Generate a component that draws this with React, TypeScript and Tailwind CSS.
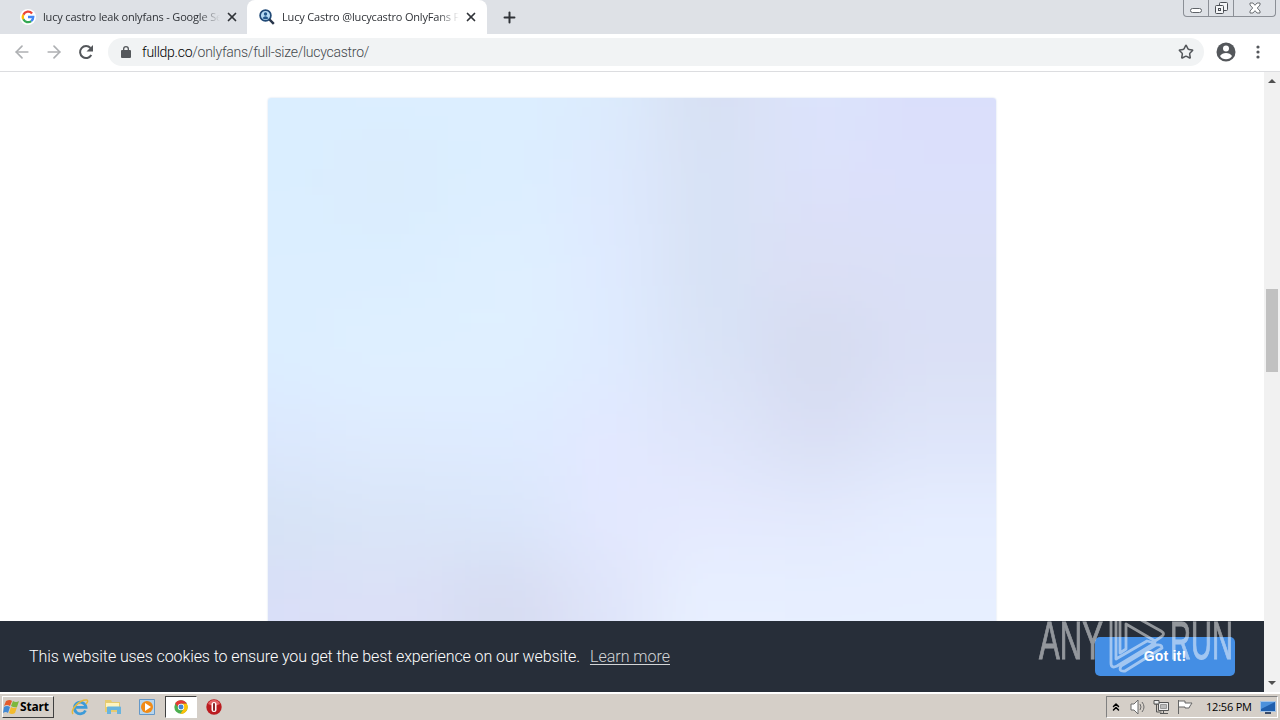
import React from 'react';
import { X, Plus, ArrowLeft, ArrowRight, Star, ChevronsUp } from 'lucide-react';

// colours of the loading gradient, row by row
const mesh = [
  ['#daeeff', '#dceeff', '#dceeff', '#dcebfd', '#d8e0f3', '#dce3fb', '#dadffb'],
  ['#daeeff', '#daecfd', '#dceeff', '#dee9fe', '#d8e2f5', '#dce1fa', '#dce0fb'],
  ['#dceeff', '#dceeff', '#dff0ff', '#dfeaff', '#d8e2f5', '#dbe0f5', '#dae0f7'],
  ['#dceeff', '#dff0ff', '#dff0ff', '#dfebff', '#d9e3f7', '#d6dbf0', '#dae0f5'],
  ['#dce8fe', '#dfebfe', '#dfebff', '#e2e8ff', '#dfe5fa', '#d9dff4', '#dee4f9'],
  ['#d7e3f5', '#d9e5f8', '#dae6fa', '#e3e8ff', '#e4e9fe', '#e3e9fd', '#e5edff'],
  ['#d9dff8', '#dbe0f7', '#d7dcf1', '#dfe4f9', '#e8f0ff', '#e7efff', '#e7efff'],
];
const edges = [-180, 55, 180, 292, 387, 494, 604, 960];

function GoogleIcon() {
  return (
    <svg width="14" height="14" viewBox="0 0 48 48" fill="none" strokeWidth="8">
      <path d="M38 12A18 18 0 0 0 8 16" stroke="#ea4335" />
      <path d="M8 16a18 18 0 0 0 0 16" stroke="#fbbc05" />
      <path d="M8 32a18 18 0 0 0 27 6" stroke="#34a853" />
      <path d="M35 38c5-4 7-8 7-14H24" stroke="#4285f4" />
    </svg>
  );
}

function ChromeIcon() {
  return (
    <svg width="14" height="14" viewBox="0 0 48 48">
      <circle cx="24" cy="24" r="23" fill="#4caf50" />
      <path d="M4 12A23 23 0 0 1 44 13H24v22Z" fill="#e53935" />
      <path d="M24 13h20a23 23 0 0 1-22 34l12-18Z" fill="#ffc107" />
      <circle cx="24" cy="24" r="11" fill="#fff" />
      <circle cx="24" cy="24" r="8.5" fill="#4285d4" />
    </svg>
  );
}

function TabStrip() {
  return (
    <div className="flex h-[34px] bg-[#dee1e6] font-['Open_Sans',sans-serif] text-[11px] tracking-[-0.17px] text-[#303338]">
      <div className="flex w-[247px] items-center pl-5">
        <div className="flex size-4 items-center justify-center rounded-full bg-white"><GoogleIcon /></div>
        <div className="ml-[7px] w-[177px] overflow-hidden whitespace-nowrap [mask-image:linear-gradient(90deg,#000_88%,transparent)]">lucy castro leak onlyfans - Google Se</div>
        <X size={14} strokeWidth={3} className="ml-[5px]" />
      </div>
      <div className="flex w-60 items-center rounded-t-lg bg-white pl-3">
        <svg width="16" height="16" viewBox="0 0 16 16" className="shrink-0">
          <circle cx="6.5" cy="6.5" r="5.4" fill="#b8dcf5" stroke="#214a77" strokeWidth="1.7" />
          <circle cx="6.5" cy="5" r="1.7" fill="#24588c" />
          <path d="M3.4 9.2q3.1-4 6.2 0q-3 2-6.2 0" fill="#24588c" />
          <path d="m10.6 10.6 4.2 4.3" stroke="#273449" strokeWidth="2.4" />
        </svg>
        <div className="ml-[7px] w-[177px] shrink-0 overflow-hidden whitespace-nowrap [mask-image:linear-gradient(90deg,#000_88%,transparent)]">Lucy Castro @lucycastro OnlyFans F</div>
        <X size={14} strokeWidth={3} className="ml-[5px] shrink-0" />
      </div>
      <div className="flex w-11 items-center justify-center"><Plus size={17} strokeWidth={2.8} /></div>
      <div className="ml-auto mr-1 flex h-[17px] w-[93px] rounded-b border border-t-0 border-[#8b8f96]">
        <div className="flex w-[25px] justify-center border-r border-[#8b8f96]">
          <div className="mt-2 h-[5px] w-3 rounded-sm border border-[#5f6368] bg-white" />
        </div>
        <div className="flex w-[25px] justify-center border-r border-[#8b8f96]">
          <svg width="13" height="13" viewBox="0 0 13 13" className="mt-[2px]" fill="#f4f5f7" stroke="#4b4f55">
            <rect x="4.5" y=".5" width="8" height="8" rx="1" />
            <rect x=".5" y="3.5" width="8" height="8" rx="1" />
            <rect x="3.5" y="6.5" width="2" height="2" />
          </svg>
        </div>
        <svg width="12" height="12" viewBox="0 0 12 12" className="mx-auto mt-[2px]" fill="#fff" stroke="#5f6368" strokeWidth=".9">
          <path d="M1 1h3l2 2.3L8 1h3v2L8.3 6 11 9v2H8L6 8.7 4 11H1V9l2.7-3L1 3Z" />
        </svg>
      </div>
    </div>
  );
}

function Toolbar() {
  return (
    <div className="flex h-[38px] items-center border-b border-[#dcdde0] bg-white pb-px pl-3">
      <ArrowLeft size={20} className="text-[#aeb0b3]" />
      <ArrowRight size={20} className="ml-3 text-[#aeb0b3]" />
      <svg width="16" height="16" viewBox="0 0 16 16" className="ml-[14px]">
        <path d="M13.3 11A6 6 0 1 1 12.5 4" fill="none" stroke="#54575b" strokeWidth="2" />
        <path d="M15 1v6.5H8.5Z" fill="#54575b" />
      </svg>
      <div className="ml-[14px] flex h-7 w-[1096px] items-center rounded-full bg-[#f1f3f4] pl-[13px] pr-[10px]">
        <svg width="10" height="12" viewBox="0 0 10 12" fill="#54575b">
          <path d="M1 4h1V3a3 3 0 0 1 6 0v1h1q1 0 1 1v6q0 1-1 1H1q-1 0-1-1V5q0-1 1-1m2.3 0h3.4V3a1.7 1.7 0 0 0-3.4 0Z" />
        </svg>
        <span className="ml-[11px] font-['Roboto',sans-serif] text-[14px] font-light tracking-[-0.26px] text-[#44484c]"><span className="text-black">fulldp.co</span>/onlyfans/full-size/lucycastro/</span>
        <Star size={16} strokeWidth={2.3} className="ml-auto text-[#54575b]" />
      </div>
      <svg width="20" height="20" viewBox="0 0 20 20" className="ml-3">
        <circle cx="10" cy="10" r="9.5" fill="#54575b" />
        <circle cx="10" cy="6.5" r="3" fill="#fff" />
        <path d="M4 14q2-3 6-3t6 3q-2 3.3-6 3.3T4 14" fill="#fff" />
      </svg>
      <svg width="4" height="16" viewBox="0 0 4 16" fill="#54575b" className="ml-5">
        <circle cx="2" cy="3" r="1.6" /><circle cx="2" cy="8" r="1.6" /><circle cx="2" cy="13" r="1.6" />
      </svg>
    </div>
  );
}

function Watermark() {
  return (
    <svg width="200" height="66" viewBox="0 0 200 66" className="absolute right-[27px] bottom-[19px] overflow-visible opacity-50">
      <g fill="#fff" stroke="#fff" strokeWidth="1" fontFamily="Liberation Sans" fontSize="53">
        <text x="2" y="52" textLength="64" lengthAdjust="spacingAndGlyphs">ANY</text>
        <text x="133" y="52" textLength="63" lengthAdjust="spacingAndGlyphs">RUN</text>
      </g>
      <g fill="none" stroke="#fff" strokeWidth="2.8" strokeLinejoin="round">
        <path d="M83 5q1-3 5-1l36 20q5 3 0 6l-6 4-29-17v25l-6 4Z" />
        <path d="M74 11q4-4 5-1v42l31-18 8 2-38 23q-6 3-6-3Z" />
        <path d="m84 59 35-21q6-1 6 3L88 64q-7 1-4-5Z" />
      </g>
    </svg>
  );
}

function CookieBar() {
  return (
    <div className="relative flex h-[71px] shrink-0 items-center bg-[#272e39] px-[29px] font-['Roboto',sans-serif] text-[16px] font-light text-white">
      <span className="tracking-[-0.1px]">This website uses cookies to ensure you get the best experience on our website.</span>
      <a className="ml-[10px] text-[#d3d5d7] underline underline-offset-2">Learn more</a>
      <button className="ml-auto h-[39px] w-[140px] rounded-[5px] bg-[#448ee4] font-['Liberation_Sans',sans-serif] text-[14px] font-bold tracking-[0.2px]">Got it!</button>
      <Watermark />
    </div>
  );
}

function Taskbar() {
  return (
    <div className="flex h-7 items-center border-t-2 border-white bg-[#d5cfc8] pl-[2px] text-black">
      <div className="flex h-[22px] w-[52px] items-center border border-t-white border-l-white border-r-[#404040] border-b-[#404040] text-[12px] font-bold">
        <svg width="17" height="16" viewBox="0 0 17 16">
          <path d="M3 2q4-2 6 0L7 7Q4 5 1 7Z" fill="#e45b2c" />
          <path d="M10 2q3 2 6 0l-2 6q-3 1-6-1Z" fill="#7db83d" />
          <path d="M1 8q3-2 6 0l-2 6q-2-2-5 0Z" fill="#4289d4" />
          <path d="M8 8q3 2 6 0l-2 6q-3 2-6 0Z" fill="#f3bb2d" />
        </svg>
        <span className="tracking-[-0.2px]">Start</span>
      </div>
      <svg width="18" height="18" viewBox="0 0 18 18" fill="none" className="ml-[17px]">
        <path d="M14.5 12.5a5.8 5.8 0 1 1 .5-3.2H5" stroke="#3d9bd8" strokeWidth="2.8" />
        <path d="M2 16C-1 12 9 1 16 2c1.5 1 0 3-1 4" stroke="#e6b93c" strokeWidth="1.5" />
      </svg>
      <svg width="18" height="18" viewBox="0 0 18 18" className="ml-[15px]">
        <path d="M1 2h6l1 2h8v10H1Z" fill="#e6cb70" />
        <path d="M2 5h13v4H2Z" fill="#fff4bf" />
        <path d="M3 16V9.5q0-1 1-1h12q1 0 1 1V16h-4v-4H7v4Z" fill="#69b4de" />
      </svg>
      <svg width="16" height="16" viewBox="0 0 16 16" className="ml-[17px]">
        <path d="M.5.5h15v15H.5Z" fill="#b7d5ed" stroke="#6598c8" />
        <circle cx="8" cy="8" r="6" fill="#f18b16" />
        <path d="m6 4 6 4-6 4Z" fill="#fff" />
      </svg>
      <div className="ml-[10px] flex h-[22px] w-[32px] items-center justify-center border border-t-[#404040] border-l-[#404040] border-r-white border-b-white bg-white"><ChromeIcon /></div>
      <svg width="16" height="16" viewBox="0 0 16 16" className="ml-[9px]">
        <circle cx="8" cy="8" r="7.7" fill="#bb1c20" />
        <path d="M2 5a6.5 6.5 0 0 1 12 0q-6 3-12 0" fill="#e36466" />
        <rect x="5.5" y="3" width="5" height="10" rx="2.5" fill="#fff" />
        <rect x="7.1" y="4" width="1.8" height="8" rx=".9" fill="#801014" />
      </svg>
      <div className="ml-auto mr-[2px] flex h-[22px] w-[172px] items-center border border-t-[#808080] border-l-[#808080] border-r-white border-b-white pl-[3px]">
        <ChevronsUp size={12} strokeWidth={3} />
        <svg width="17" height="16" viewBox="0 0 17 16" className="ml-2 shrink-0" fill="#fff" stroke="#6b6b6b">
          <path d="M1 5h3l4-4v14l-4-4H1Z" />
          <path d="M10 5q2 3 0 6M12 3q4 5 0 10" fill="none" />
        </svg>
        <svg width="17" height="16" viewBox="0 0 17 16" className="ml-[6px] shrink-0" fill="#eee" stroke="#555">
          <path d="M5.5 3.5h10v8h-10Z" /><path d="M7.5 5.5h6v4h-6Z" fill="#bbb" stroke="#999" />
          <path d="M10.5 12v2M7 14.5h8M1.5 1v4h4V1M3.5 5v8h5" fill="none" />
          <path d="M1 1.5h5v3.5H1Z" />
        </svg>
        <svg width="17" height="16" viewBox="0 0 17 16" className="ml-[7px] shrink-0" fill="#fff" stroke="#666">
          <path d="M1.5 1v14M2 2h6v2h7l-2 3-1 2H8V8H2" />
        </svg>
        <span className="ml-[12px] whitespace-nowrap text-[11px] tracking-[-0.2px]">12:56 PM</span>
        <svg width="16" height="14" viewBox="0 0 16 14" className="ml-[8px] shrink-0">
          <path d="M.5 1.5h15v10H.5Z" fill="#205fad" stroke="#a4c4e7" />
          <path d="M1 2h14L1 9Z" fill="#4c91dc" /><path d="M5 12h6v2H5Z" fill="#3a4b69" />
        </svg>
      </div>
    </div>
  );
}

export default function App() {
  return (
    <div className="flex h-[720px] w-[1280px] flex-col overflow-hidden bg-white font-['Open_Sans',sans-serif]">
      <TabStrip />
      <Toolbar />
      <div className="flex h-[620px]">
        <div className="flex w-[1264px] flex-col">
          <div className="flex min-h-0 flex-1 overflow-hidden pt-[26px] pl-[268px]">
            <svg width="728" height="620" viewBox="0 0 728 620" className="shrink-0 rounded-[3px] shadow-[0_0_2px_#cbd8eb]">
              <filter id="soft" x="-20%" y="-20%" width="140%" height="140%"><feGaussianBlur stdDeviation="35" /></filter>
              <g filter="url(#soft)">
                {mesh.map((row, y) => row.map((color, x) => (
                  <rect key={`${x}-${y}`} x={edges[x]} y={y === 0 ? -180 : y * 84 - 42} width={edges[x + 1] - edges[x] + 1} height={y === 0 ? 223 : y === 6 ? 300 : 85} fill={color} />
                )))}
              </g>
            </svg>
          </div>
          <CookieBar />
        </div>
        <div className="flex w-4 flex-col items-center bg-[#f1f1f1]">
          <div className="mt-[7px] border-x-4 border-b-4 border-x-transparent border-b-[#505050]" />
          <div className="mt-[206px] h-[83px] w-3 bg-[#c1c1c1]" />
          <div className="mt-auto mb-[7px] border-x-4 border-t-4 border-x-transparent border-t-[#505050]" />
        </div>
      </div>
      <Taskbar />
    </div>
  );
}
